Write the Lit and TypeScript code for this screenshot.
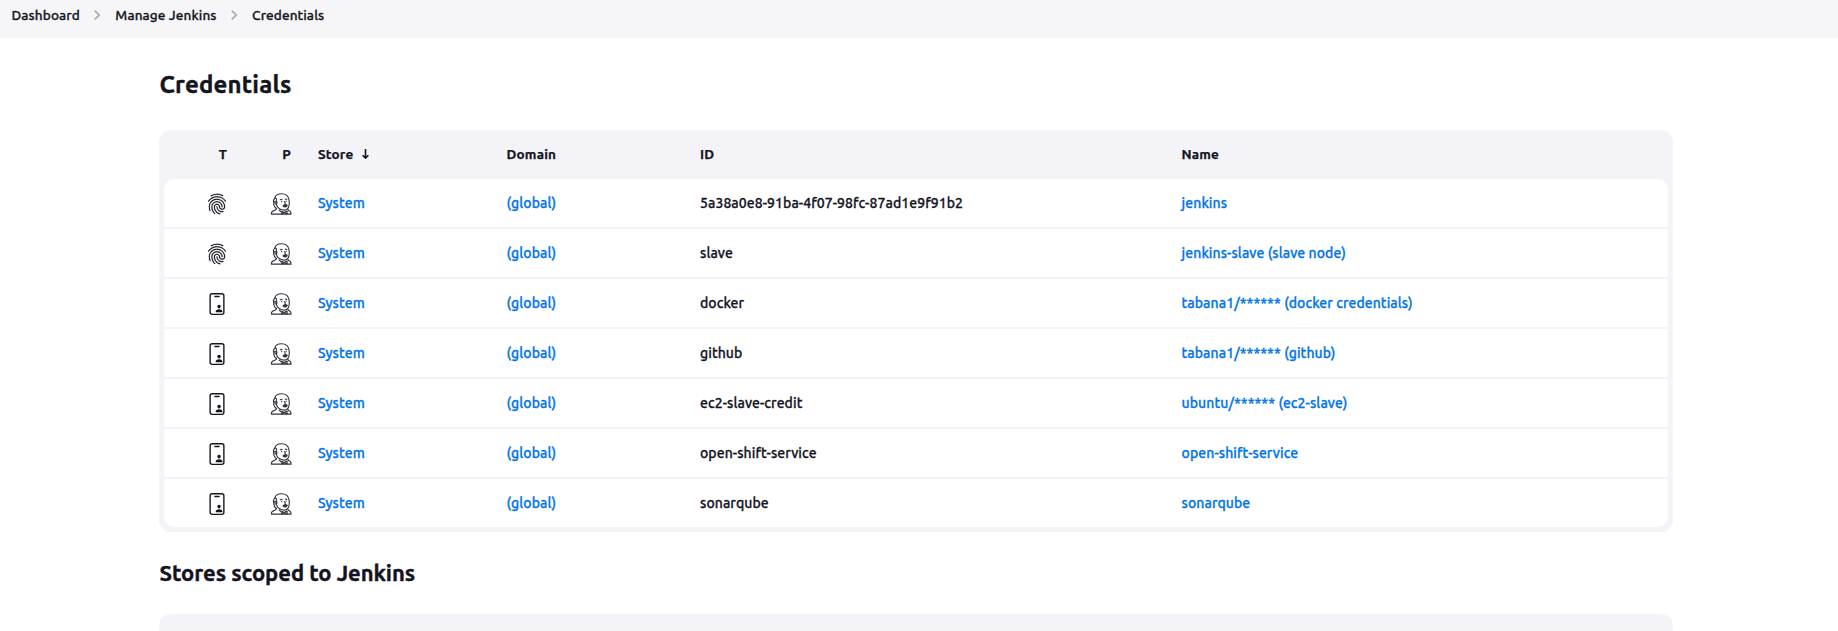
import { LitElement, html, css, svg } from "lit";
import { customElement, property } from "lit/decorators.js";

type Kind = "key" | "card";

interface Credential {
  kind: Kind;
  id: string;
  name: string;
}

const CREDENTIALS: Credential[] = [
  { kind: "key", id: "5a38a0e8-91ba-4f07-98fc-87ad1e9f91b2", name: "jenkins" },
  { kind: "key", id: "slave", name: "jenkins-slave (slave node)" },
  { kind: "card", id: "docker", name: "tabana1/****** (docker credentials)" },
  { kind: "card", id: "github", name: "tabana1/****** (github)" },
  { kind: "card", id: "ec2-slave-credit", name: "ubuntu/****** (ec2-slave)" },
  { kind: "card", id: "open-shift-service", name: "open-shift-service" },
  { kind: "card", id: "sonarqube", name: "sonarqube" },
];

const SHAPES = {
  key: svg`<path fill="currentColor" stroke="currentColor" stroke-width="4" d="M390.42 75.28a10.45 10.45 0 01-5.32-1.44C340.72 50.08 302.35 40 256.35 40c-45.77 0-89.23 11.28-128.76 33.84C122 77 115.11 74.8 111.87 69a12.4 12.4 0 014.63-16.32A281.81 281.81 0 01256.35 16c49.23 0 92.23 11.28 139.39 36.48a12 12 0 014.85 16.08 11.3 11.3 0 01-10.17 6.72zm-330.79 126a11.73 11.73 0 01-6.7-2.16 12.26 12.26 0 01-2.78-16.8c22.89-33.6 52-60 86.69-78.48 72.58-38.84 165.51-39.12 238.32-.24 34.68 18.48 63.8 44.64 86.69 78a12.29 12.29 0 01-2.78 16.8 11.26 11.26 0 01-16.18-2.88c-20.8-30.24-47.15-54-78.36-70.56-66.34-35.28-151.18-35.28-217.29.24-31.44 16.8-57.79 40.8-78.59 71a10 10 0 01-9.02 5.08zM204.1 491a10.66 10.66 0 01-8.09-3.6C175.9 466.48 165 453 149.55 424c-16-29.52-24.27-65.52-24.27-104.16 0-71.28 58.71-129.36 130.84-129.36S387 248.56 387 319.84a11.56 11.56 0 11-23.11 0c0-58.08-48.32-105.36-107.72-105.36S148.4 261.76 148.4 319.84c0 34.56 7.39 66.48 21.49 92.4 14.8 27.6 25 39.36 42.77 58.08a12.67 12.67 0 010 17 12.44 12.44 0 01-8.56 3.68zm165.75-44.4c-27.51 0-51.78-7.2-71.66-21.36a129.1 129.1 0 01-55-105.36 11.57 11.57 0 1123.12 0 104.28 104.28 0 0044.84 85.44c16.41 11.52 35.6 17 58.72 17a147.41 147.41 0 0024-2.4c6.24-1.2 12.25 3.12 13.4 9.84a11.92 11.92 0 01-9.47 13.92 152.28 152.28 0 01-27.95 2.88zM323.38 496a13 13 0 01-3-.48c-36.76-10.56-60.8-24.72-86-50.4-32.37-33.36-50.16-77.76-50.16-125.28 0-38.88 31.9-70.56 71.19-70.56s71.2 31.68 71.2 70.56c0 25.68 21.5 46.56 48.08 46.56s48.08-20.88 48.08-46.56c0-90.48-75.13-163.92-167.59-163.92-65.65 0-125.75 37.92-152.79 96.72-9 19.44-13.64 42.24-13.64 67.2 0 18.72 1.61 48.24 15.48 86.64 2.32 6.24-.69 13.2-6.7 15.36a11.34 11.34 0 01-14.79-7 276.39 276.39 0 01-16.88-95c0-28.8 5.32-55 15.72-77.76 30.75-67.2 99.14-110.4 173.6-110.4 105.18 0 190.71 84.24 190.71 187.92 0 38.88-31.9 70.56-71.2 70.56s-71.2-31.68-71.2-70.56c.01-25.68-21.49-46.56-48.07-46.56s-48.08 20.88-48.08 46.56c0 41 15.26 79.44 43.23 108.24 22 22.56 43 35 75.59 44.16 6.24 1.68 9.71 8.4 8.09 14.64a11.39 11.39 0 01-10.87 9.36z"/>`,
  card: svg`<rect x="96" y="16" width="320" height="480" rx="48" fill="none" stroke="currentColor" stroke-width="32"/><path d="M208 80h96" fill="none" stroke="currentColor" stroke-width="32" stroke-linecap="round"/><path fill="currentColor" d="M333.48 284.51A39.65 39.65 0 00304 272c-11.6 0-22.09 4.41-29.54 12.43s-11.2 19.12-10.34 31C265.83 338.91 283.72 358 304 358s38.14-19.09 39.87-42.55c.88-11.78-2.82-22.77-10.39-30.94zM371.69 448H236.31a12.05 12.05 0 01-9.31-4 13.07 13.07 0 01-2.76-10.92c3.25-17.56 13.51-32.31 29.69-42.66C267.68 381.06 285.6 376 304 376s36.32 5.06 50.07 14.42c16.18 10.35 26.44 25.1 29.69 42.66A13.07 13.07 0 01381 444a12.05 12.05 0 01-9.31 4z"/>`,
  butler: svg`<g fill="none" stroke="currentColor" stroke-width="26" stroke-linecap="round" stroke-linejoin="round"><path d="M150 362C104 326 80 276 90 228C72 190 82 150 108 124C126 52 186 16 268 16C366 16 432 74 444 166C454 250 454 310 416 358C382 394 328 404 286 388"/><path d="M108 124C132 112 148 120 152 142M92 228C96 196 122 190 138 210C150 236 136 258 114 254M152 142C140 176 144 196 160 206C164 230 158 250 150 262M150 266C162 326 200 366 270 388"/><path d="M240 156C254 142 268 142 282 156M356 146C368 136 380 138 392 148M272 196v6M378 186v6M340 200C350 222 366 236 350 250"/><path fill="currentColor" d="M304 300C326 270 366 262 402 284C392 336 330 340 304 300z"/><path d="M34 492C28 446 56 418 100 410L150 372M34 492H490C492 446 466 418 432 408L412 370M214 396L260 438"/><path fill="currentColor" fill-opacity=".35" d="M276 424L326 452L398 418V488L330 458L276 490z"/></g>`,
};

@customElement("line-icon")
class LineIcon extends LitElement {
  static styles = css`
    :host { display: block; width: 22px; height: 22px; color: #14141f; }
    :host([name="butler"]) { color: #33333d; }
    svg { display: block; width: 100%; height: 100%; }
  `;
  @property() name: keyof typeof SHAPES = "card";
  render() {
    return html`<svg viewBox="0 0 512 512" aria-hidden="true">${SHAPES[this.name]}</svg>`;
  }
}

@customElement("crumb-bar")
class CrumbBar extends LitElement {
  static styles = css`
    :host { display: block; }
    nav { display: flex; height: 38px; box-sizing: border-box; padding: 5px 11.5px 0; background: #f6f6f8; font-size: 13.6px; line-height: 20px; font-weight: 500; letter-spacing: 0.1px; color: #14141f; -webkit-text-stroke: 0.3px currentColor; }
    svg { width: 6px; height: 10px; margin: 5px 15px 0 14.5px; fill: none; stroke: #a9a9b8; stroke-width: 1.7; }
  `;
  render() {
    const chevron = html`<svg viewBox="0 0 6 10"><path d="M.7 .6L5.2 5L.7 9.4" /></svg>`;
    return html`<nav><span>Dashboard</span>${chevron}<span>Manage Jenkins</span>${chevron}<span>Credentials</span></nav>`;
  }
}

@customElement("credentials-table")
class CredentialsTable extends LitElement {
  static styles = css`
    :host { display: block; box-sizing: border-box; height: 402px; padding: 0 5px 5px; border-radius: 12px; background: #f3f3f8; }
    .line { display: grid; grid-template-columns: 63px 64px 27px 188.6px 193.4px 481.6px 1fr; align-items: center; }
    .head { height: 49px; font-size: 13.5px; font-weight: 700; letter-spacing: 0.15px; -webkit-text-stroke: 0.25px currentColor; }
    .head > span { line-height: 16px; height: 17px; }
    .head .mark { text-align: right; }
    .rows { display: grid; gap: 2px; }
    .row { height: 48px; border-radius: 3px; background: #fff; font-size: 14px; font-weight: 500; letter-spacing: 0.08px; -webkit-text-stroke: 0.3px currentColor; }
    .row:first-child { border-radius: 10px 10px 3px 3px; }
    .row:last-child { border-radius: 3px 3px 10px 10px; }
    .row line-icon { justify-self: end; margin-right: -1px; margin-top: 2px; }
    .row a { color: #0074e8; }
    .store { grid-column: 4; }
    .arrow { display: inline-block; width: 7px; height: 10px; margin-left: 5.5px; fill: none; stroke: currentColor; stroke-width: 1.6; }
  `;
  render() {
    return html`
      <div class="line head">
        <span class="mark">T</span><span class="mark">P</span>
        <span class="store">Store <svg class="arrow" viewBox="0 0 7 10"><path d="M3.5 0V9M.6 6.2L3.5 9.1L6.4 6.2" /></svg></span>
        <span>Domain</span><span>ID</span><span>Name</span>
      </div>
      <div class="rows">
        ${CREDENTIALS.map((c) => html`
          <div class="line row">
            <line-icon name=${c.kind}></line-icon><line-icon name="butler"></line-icon>
            <a class="store">System</a><a>(global)</a><span>${c.id}</span><a>${c.name}</a>
          </div>`)}
      </div>`;
  }
}

@customElement("app-root")
class AppRoot extends LitElement {
  static styles = css`
    :host { display: block; height: 631px; overflow: hidden; background: #fff; color: #14141f; font-family: Ubuntu, "Noto Sans", sans-serif; }
    main { width: 1514px; margin-left: 159px; }
    h1, h2 { margin: 0; font-weight: 700; line-height: 32px; -webkit-text-stroke: 0.4px currentColor; }
    h1 { font-size: 24px; letter-spacing: 0.2px; padding: 31px 0 29px 0.5px; }
    h2 { font-size: 22px; letter-spacing: -0.04px; padding: 25px 0 25px 0.5px; }
    .stores { height: 60px; border-radius: 12px; background: #f3f3f8; }
  `;
  render() {
    return html`
      <crumb-bar></crumb-bar>
      <main>
        <h1>Credentials</h1>
        <credentials-table></credentials-table>
        <h2>Stores scoped to Jenkins</h2>
        <div class="stores"></div>
      </main>`;
  }
}
